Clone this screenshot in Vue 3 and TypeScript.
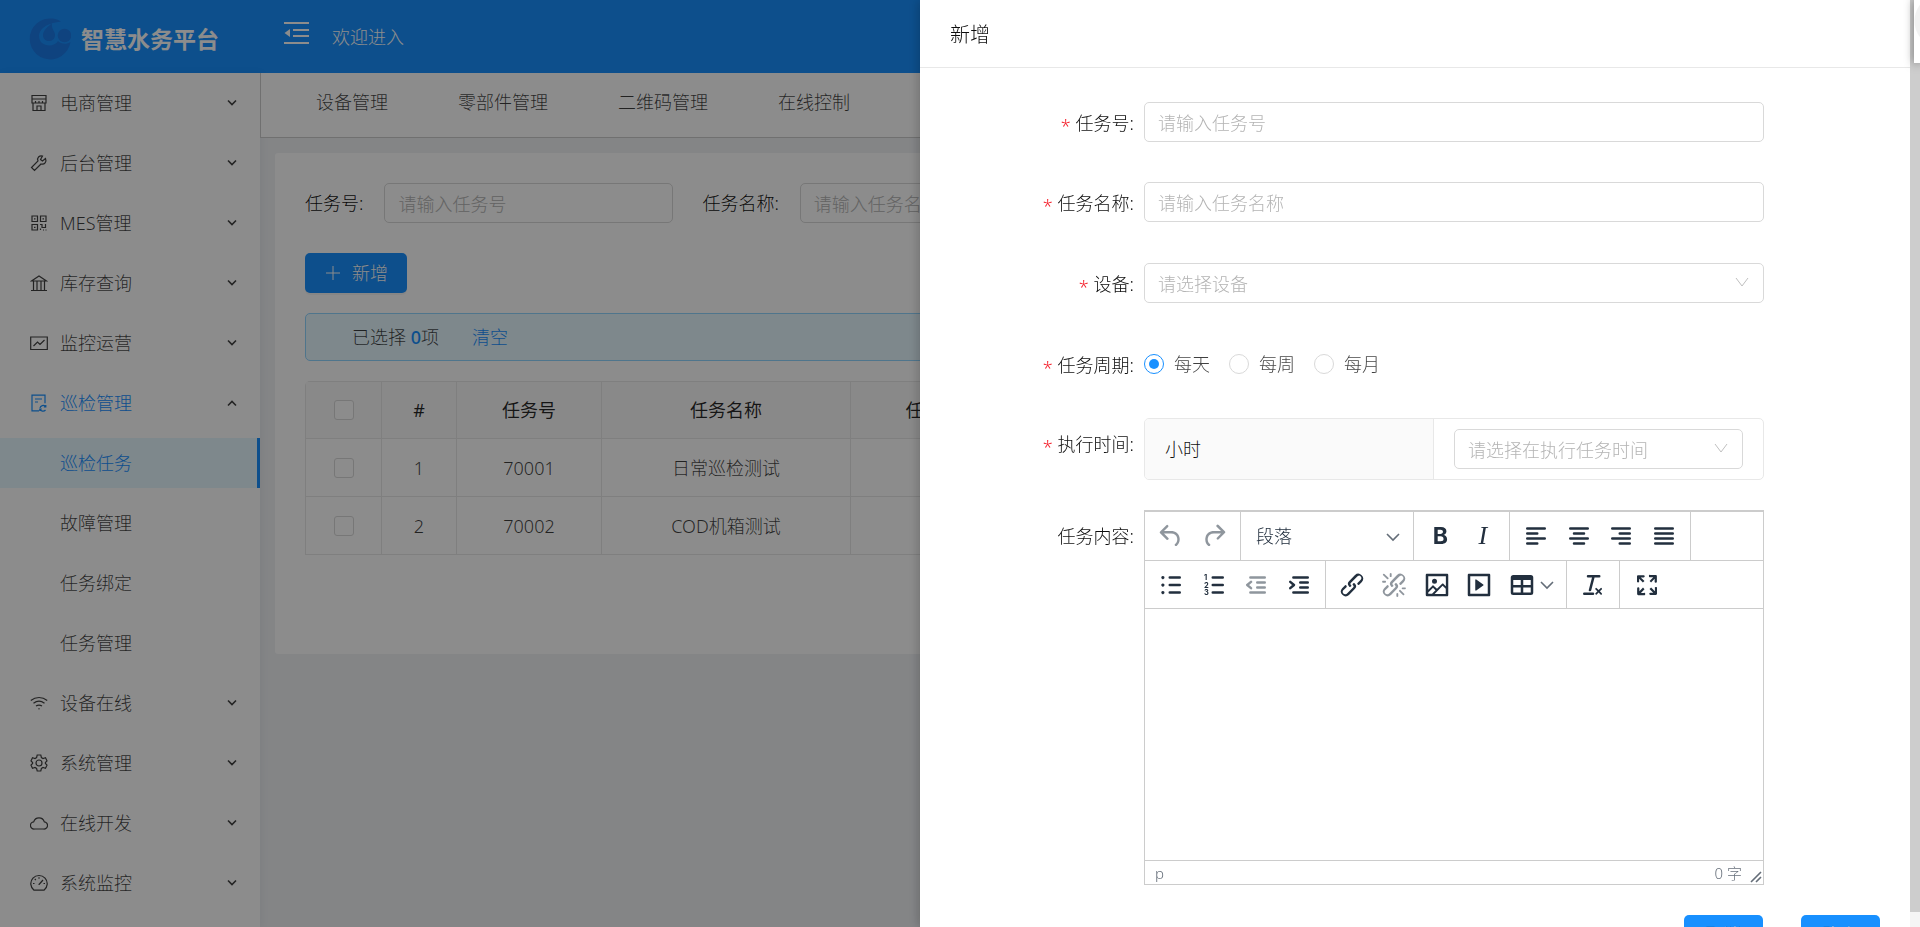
<script setup lang="ts">
import { ref } from 'vue'

interface MenuItem {
  label: string
  icon: string
  open?: boolean
  children?: string[]
}

interface ToolButton {
  label: string
  path?: string
  text?: string
  kind?: string
  disabled?: boolean
  menu?: boolean
  digits?: boolean
}

const menu: MenuItem[] = [
  { label: '电商管理', icon: 'M2 1.500h14V5H2zM2 5v4h14V5M5.500 7v2M9 7v2M12.500 7v2M3 9v7.500h12V9M7 16.500V12h4v4.500' },
  { label: '后台管理', icon: 'M15.500 4.500l-3 2.500-2-1.500 2-3.500c-3-1-6 2-4.500 5L1.500 13.500 4.500 16.500 11 10c3.500 1 6-2 4.500-5.500z' },
  { label: 'MES管理', icon: 'M2 2h5.500v5.500H2zM10.500 2H16v5.500h-5.500zM2 10.500h5.500V16H2zM4 4.800h1.500M12.500 4.800H14M4 13.300h1.500M10 10.500h2v3h3.500v-3.500M10.500 16v-1.500M13 16h1M15.500 16h1' },
  { label: '库存查询', icon: 'M1.500 7h15L9 2zM1 16.500h16M3.500 7v9M7 7v9M11 7v9M14.500 7v9' },
  { label: '监控运营', icon: 'M.7 3h16.600v12.500H.7zM3.500 12l4-4 2.500 2.500L14.500 6' },
  {
    label: '巡检管理',
    icon: 'M9 16.800H2V1.200h13v8M5 5h7M5 8h3M15.500 12.500a3.200 3.200 0 0 0-5.500 1.500M10 15a3.200 3.200 0 0 0 5.500 1M15.800 11v2h-2M9.800 17v-2h2',
    open: true,
    children: ['巡检任务', '故障管理', '任务绑定', '任务管理'],
  },
  { label: '设备在线', icon: 'M.8 6.500c5-4 11.500-4 16.400 0M3.500 9.300c3.400-2.700 7.600-2.700 11 0M6 12c2-1.300 4-1.300 6 0M8.500 14.500h1M8.500 15h1' },
  { label: '系统管理', icon: 'M7.200 1h3.600l.6 2.500 1.600 1 2.500-.8L17 6.800l-1.600 1.700v1L17 11.200l-1.500 3.100-2.500-.8-1.600 1-.6 2.500H7.200l-.6-2.500-1.600-1-2.500.8L1 11.200l1.600-1.700v-1L1 6.800l1.500-3.100 2.500.8 1.600-1zM12 9a3 3 0 1 1-6 0 3 3 0 0 1 6 0z' },
  { label: '在线开发', icon: 'M4.500 15a3.600 3.600 0 0 1-.8-7.200c1.600-5.300 9-5.300 10.600 0a3.600 3.600 0 0 1-.8 7.200z' },
  { label: '系统监控', icon: 'M4 16.200a8.200 8.200 0 1 1 10 0zM9 3.200v1.500M4.800 5l1 1M3 9.500h1.500M13.500 9.500H15M9 10.500l4-4.500M8.500 10.500h1' },
]
const activeChild = '巡检任务'

const tabs = ['设备管理', '零部件管理', '二维码管理', '在线控制']

const rows = [
  { index: 1, code: '70001', name: '日常巡检测试' },
  { index: 2, code: '70002', name: 'COD机箱测试' },
]

const periods = ['每天', '每周', '每月']
const period = ref('每天')

const linkPath =
  'M6.2 12.3a1 1 0 0 1 1.4 1.4l-2.1 2a2 2 0 1 0 2.7 2.8l4.8-4.8a1 1 0 0 0 0-1.4 1 1 0 1 1 1.4-1.3 2.9 2.9 0 0 1 0 4L9.6 20a3.9 3.9 0 0 1-5.5-5.5l2-2zm11.6-.6a1 1 0 0 1-1.4-1.4l2-2a2 2 0 1 0-2.6-2.8L11 10.3a1 1 0 0 0 0 1.4A1 1 0 1 1 9.6 13a2.9 2.9 0 0 1 0-4L14.4 4a3.9 3.9 0 0 1 5.5 5.5l-2 2z'

const undoRedo: ToolButton[] = [
  { label: '撤销', disabled: true, path: 'M6.4 8H12c3.7 0 6.2 2 6.8 5.1.6 2.7-.4 5.6-2.3 6.8a1 1 0 0 1-1-1.8c1.1-.6 1.8-2.7 1.4-4.6-.5-2.1-2.1-3.5-4.9-3.5H6.4l3.3 3.3a1 1 0 1 1-1.4 1.4l-5-5a1 1 0 0 1 0-1.4l5-5a1 1 0 0 1 1.4 1.4L6.4 8z' },
  { label: '重做', disabled: true, path: 'M17.6 10H12c-2.8 0-4.4 1.4-4.9 3.5-.4 2 .3 4 1.4 4.6a1 1 0 1 1-1 1.8c-2-1.2-2.9-4.1-2.3-6.8.6-3 3-5.1 6.8-5.1h5.6l-3.3-3.3a1 1 0 1 1 1.4-1.4l5 5a1 1 0 0 1 0 1.4l-5 5a1 1 0 0 1-1.4-1.4l3.3-3.3z' },
]
const styles: ToolButton[] = [
  { label: '粗体', text: 'B', kind: 'bold' },
  { label: '斜体', text: 'I', kind: 'italic' },
]
const aligns: ToolButton[] = [
  { label: '左对齐', kind: 'line', path: 'M5 6h14M5 10h8M5 14h14M5 18h8' },
  { label: '居中', kind: 'line', path: 'M5 6h14M8 10h8M5 14h14M8 18h8' },
  { label: '右对齐', kind: 'line', path: 'M5 6h14M11 10h8M5 14h14M11 18h8' },
  { label: '两端对齐', kind: 'line', path: 'M5 6h14M5 10h14M5 14h14M5 18h14' },
]
const lists: ToolButton[] = [
  { label: '项目符号', kind: 'line', path: 'M11 6h8M11 12h8M11 18h8M5.500 5.700v.6M5.500 11.700v.6M5.500 17.700v.6M5.200 6h.6M5.200 12h.6M5.200 18h.6' },
  { label: '编号列表', kind: 'line', digits: true, path: 'M11 6h8M11 12h8M11 18h8' },
  { label: '减少缩进', kind: 'line', disabled: true, path: 'M7.500 6H19M13 10h6M13 14h6M7.500 18H19M8 9.500L5 12l3 2.500' },
  { label: '增加缩进', kind: 'line', path: 'M7.500 6H19M13 10h6M13 14h6M7.500 18H19M5 9.500L8 12l-3 2.500' },
]
const inserts: ToolButton[] = [
  { label: '插入链接', path: linkPath },
  { label: '取消链接', disabled: true, path: linkPath + 'M7.6 6.3a.8.8 0 0 1-1 1.1L3.3 4.2a.7.7 0 1 1 1-1l3.2 3.1zM5.1 8.6a.8.8 0 0 1 0 1.5H3a.8.8 0 0 1 0-1.5H5zm5-3.5a.8.8 0 0 1-1.5 0V3a.8.8 0 0 1 1.5 0V5zm6 11.8a.8.8 0 0 1 1-1l3.2 3.2a.8.8 0 0 1-1 1L16 17zm-2.2 2a.8.8 0 0 1 1.5 0V21a.8.8 0 0 1-1.5 0V19zm5-3.5a.7.7 0 1 1 0-1.5H21a.8.8 0 0 1 0 1.5H19z' },
  { label: '插入图片', path: 'M5 15.7l3.3-3.2c.3-.3.7-.3 1 0L12 15l4.1-4c.3-.4.8-.4 1 0l2 1.9V5H5v10.7zM5 18V19h3l2.8-2.9-2-2L5 17.9zm14-3l-2.5-2.4-6.4 6.5H19v-4zM4 3h16c.6 0 1 .4 1 1v16c0 .6-.4 1-1 1H4a1 1 0 0 1-1-1V4c0-.6.4-1 1-1zm6 8a2 2 0 1 0 0-4 2 2 0 0 0 0 4z' },
  { label: '插入媒体', path: 'M4 3h16c.6 0 1 .4 1 1v16c0 .6-.4 1-1 1H4a1 1 0 0 1-1-1V4c0-.6.4-1 1-1zm1 2v14h14V5H5zm4.8 2.6l5.6 4a.5.5 0 0 1 0 .8l-5.6 4A.5.5 0 0 1 9 16V8a.5.5 0 0 1 .8-.4z' },
  { label: '表格', menu: true, path: 'M19 4a2 2 0 0 1 2 2v12a2 2 0 0 1-2 2H5a2 2 0 0 1-2-2V6c0-1.1.9-2 2-2h14zM5 14v4h6v-4H5zm14 0h-6v4h6v-4zm0-6h-6v4h6V8zM5 12h6V8H5v4z' },
]
const clears: ToolButton[] = [
  { label: '清除格式', path: 'M13.2 6a1 1 0 0 1 0 .2l-2.6 10a1 1 0 0 1-1 .8h-.2a.8.8 0 0 1-.8-1l2.6-10H8a1 1 0 1 1 0-2h9a1 1 0 0 1 0 2h-3.8zM5 18h7a1 1 0 0 1 0 2H5a1 1 0 0 1 0-2zm13 1.5L16.5 18 15 19.5a.7.7 0 0 1-1-1l1.5-1.5-1.5-1.5a.7.7 0 0 1 1-1l1.5 1.5 1.5-1.5a.7.7 0 0 1 1 1L17.5 17l1.5 1.5a.7.7 0 0 1-1 1z' },
]
const screens: ToolButton[] = [
  { label: '全屏', path: 'M15.3 10l-1.2-1.3 2.9-3h-2.3a.9.9 0 1 1 0-1.7H19c.5 0 .9.4.9.9v4.4a.9.9 0 1 1-1.8 0V7l-2.9 3zm0 4l3 3v-2.3a.9.9 0 1 1 1.7 0V19c0 .5-.4.9-.9.9h-4.4a.9.9 0 1 1 0-1.8H17l-3-2.9 1.3-1.2zM10 15.4l-2.9 3h2.3a.9.9 0 1 1 0 1.7H5a.9.9 0 0 1-.9-.9v-4.4a.9.9 0 1 1 1.8 0V17l2.9-3 1.2 1.3zM8.7 10L5.7 7v2.3a.9.9 0 0 1-1.7 0V5c0-.5.4-.9.9-.9h4.4a.9.9 0 0 1 0 1.8H7l3 2.9-1.3 1.2z' },
]

const toolbars = [
  [
    { id: 'history', buttons: undoRedo },
    { id: 'block', buttons: [] as ToolButton[] },
    { id: 'style', buttons: styles },
    { id: 'align', buttons: aligns },
  ],
  [
    { id: 'list', buttons: lists },
    { id: 'insert', buttons: inserts },
    { id: 'clear', buttons: clears },
    { id: 'screen', buttons: screens },
  ],
]
</script>

<template>
  <div class="app">
    <header class="topbar">
      <div class="brand">
        <svg class="logo" viewBox="0 0 42 42" aria-hidden="true">
          <path d="M32 3.500A20.500 20.500 0 1 0 41.500 24C37 27 32 26 29 23 26 28 18 29 13 25 7 19 9 6 32 3.500z" />
          <path d="M23 5c-3 3-9 7-9 12 0 8 12 8 12 0 0-4-4-6-3-12z" />
          <circle cx="35.500" cy="17.500" r="6.800" />
        </svg>
        <h1>智慧水务平台</h1>
      </div>
      <button class="fold" type="button" aria-label="收起菜单">
        <svg viewBox="0 0 25 22"><path d="M0 1h25M9 8h16M9 14h16M0 21h25" /><path class="fill" d="M6 7v8l-5.500-4z" /></svg>
      </button>
      <span class="welcome">欢迎进入</span>
    </header>

    <div class="body">
      <nav class="sidebar">
        <template v-for="item in menu" :key="item.label">
          <a href="#" class="item" :class="{ open: item.open }">
            <svg class="icon" viewBox="0 0 18 18"><path :d="item.icon" /></svg>
            <span>{{ item.label }}</span>
            <svg class="arrow" :class="{ up: item.open }" viewBox="0 0 10 8"><path d="M1 1.500l4 4 4-4" /></svg>
          </a>
          <a v-for="child in item.children" :key="child" href="#" class="item child" :class="{ active: child === activeChild }">{{ child }}</a>
        </template>
      </nav>

      <main>
        <div class="tabs">
          <a v-for="tab in tabs" :key="tab" href="#">{{ tab }}</a>
        </div>
        <section class="card">
          <div class="search">
            <label for="q-code">任务号:</label>
            <input id="q-code" class="field" placeholder="请输入任务号" />
            <label for="q-name">任务名称:</label>
            <input id="q-name" class="field" placeholder="请输入任务名称" />
          </div>
          <button class="primary add" type="button">
            <svg viewBox="0 0 14 14"><path d="M7 0v14M0 7h14" /></svg>新增
          </button>
          <div class="notice">
            <span>已选择 <b>0</b>项</span>
            <a href="#">清空</a>
          </div>
          <table>
            <colgroup>
              <col class="c-check" /><col class="c-index" /><col class="c-code" /><col class="c-name" /><col class="c-cycle" /><col />
            </colgroup>
            <thead>
              <tr>
                <th><input type="checkbox" aria-label="全选" /></th>
                <th>#</th>
                <th>任务号</th>
                <th>任务名称</th>
                <th>任务周期</th>
                <th></th>
              </tr>
            </thead>
            <tbody>
              <tr v-for="row in rows" :key="row.code">
                <td><input type="checkbox" :aria-label="row.name" /></td>
                <td>{{ row.index }}</td>
                <td>{{ row.code }}</td>
                <td>{{ row.name }}</td>
                <td></td>
                <td></td>
              </tr>
            </tbody>
          </table>
        </section>
      </main>
    </div>

    <div class="mask"></div>

    <aside class="drawer">
      <div class="panel">
        <h2>新增</h2>
        <form @submit.prevent>
          <div class="row">
            <label class="caption required" for="f-code">任务号:</label>
            <input id="f-code" class="field" placeholder="请输入任务号" />
          </div>
          <div class="row">
            <label class="caption required" for="f-name">任务名称:</label>
            <input id="f-name" class="field" placeholder="请输入任务名称" />
          </div>
          <div class="row">
            <label class="caption required" for="f-device">设备:</label>
            <div class="select">
              <select id="f-device" class="field"><option>请选择设备</option></select>
              <svg viewBox="0 0 14 10"><path d="M1 1l6 8 6-8" /></svg>
            </div>
          </div>
          <div class="row">
            <span id="f-period" class="caption required">任务周期:</span>
            <div class="radios" role="radiogroup" aria-labelledby="f-period">
              <label v-for="p in periods" :key="p"><input v-model="period" type="radio" name="period" :value="p" />{{ p }}</label>
            </div>
          </div>
          <div class="row tall">
            <label class="caption required" for="f-time">执行时间:</label>
            <div class="timebox">
              <div class="unit">小时</div>
              <div class="pick">
                <div class="select">
                  <select id="f-time" class="field"><option>请选择在执行任务时间</option></select>
                  <svg viewBox="0 0 14 10"><path d="M1 1l6 8 6-8" /></svg>
                </div>
              </div>
            </div>
          </div>
          <div class="row tall">
            <label class="caption" for="f-content">任务内容:</label>
            <div class="editor">
              <div v-for="(bar, b) in toolbars" :key="b" class="toolbar">
                <div v-for="group in bar" :key="group.id" class="group" :class="group.id">
                  <div v-if="group.id === 'block'" class="block-select">
                    <select aria-label="段落格式"><option>段落</option></select>
                    <svg viewBox="0 0 14 10"><path d="M1 2l6 6 6-6" /></svg>
                  </div>
                  <button
                    v-for="tool in group.buttons"
                    :key="tool.label"
                    type="button"
                    :aria-label="tool.label"
                    :disabled="tool.disabled"
                    :class="[tool.kind, { menu: tool.menu }]"
                  >
                    <template v-if="tool.text">{{ tool.text }}</template>
                    <svg v-else class="glyph" viewBox="0 0 24 24">
                      <path :d="tool.path" />
                      <g v-if="tool.digits" class="digits"><text x="4" y="8">1</text><text x="4" y="14">2</text><text x="4" y="20">3</text></g>
                    </svg>
                    <svg v-if="tool.menu" class="caret" viewBox="0 0 14 10"><path d="M1 2l6 6 6-6" /></svg>
                  </button>
                </div>
              </div>
              <textarea id="f-content"></textarea>
              <div class="status">
                <span>p</span>
                <span>0 字</span>
                <svg viewBox="0 0 12 12"><path d="M1 11L11 1M6 11l5-5" /></svg>
              </div>
            </div>
          </div>
          <div class="actions">
            <button class="primary" type="button">取消</button>
            <button class="primary" type="submit">确定</button>
          </div>
        </form>
      </div>
      <div class="scrollbar"></div>
      <div class="float"></div>
    </aside>
  </div>
</template>

<style>
body {
  margin: 0;
}
</style>

<style scoped>
* {
  box-sizing: border-box;
}
.app {
  height: 100vh;
  display: flex;
  flex-direction: column;
  overflow: hidden;
  background: #f0f2f5;
  color: rgba(0, 0, 0, 0.75);
  font: 300 18px/28px "Noto Sans", "Noto Sans CJK SC", sans-serif;
}
a {
  color: inherit;
  text-decoration: none;
}
button,
input,
select,
textarea {
  margin: 0;
  font: inherit;
  color: inherit;
}
.topbar {
  flex: none;
  height: 73px;
  display: flex;
  align-items: center;
  background: #1890ff;
  color: #fff;
}
.brand {
  width: 284px;
  display: flex;
  align-items: center;
  gap: 10px;
  padding: 5px 0 0 29px;
}
.logo {
  width: 42px;
  height: 42px;
  fill: #1d7ae7;
}
h1 {
  margin: 0;
  font-size: 23px;
  font-weight: 700;
  line-height: 34px;
}
.fold {
  padding: 0 0 8px;
  border: 0;
  background: none;
}
.fold svg {
  display: block;
  width: 25px;
  height: 22px;
  fill: none;
  stroke: #fff;
  stroke-width: 2;
}
.fold .fill {
  fill: #fff;
  stroke: none;
}
.welcome {
  margin-left: 23px;
}
.body {
  flex: 1;
  display: flex;
  min-height: 0;
}
.sidebar {
  flex: none;
  width: 260px;
  display: flex;
  flex-direction: column;
  gap: 10px;
  padding-top: 5px;
  overflow: hidden;
  background: #fff;
  box-shadow: 2px 0 8px rgba(29, 35, 41, 0.05);
}
.item {
  flex: none;
  height: 50px;
  display: flex;
  align-items: center;
  padding: 0 23px 0 30px;
}
.icon {
  width: 18px;
  height: 18px;
  margin-right: 12px;
  fill: none;
  stroke: currentColor;
  stroke-width: 1.2;
}
.arrow {
  width: 10px;
  height: 8px;
  margin-left: auto;
  fill: none;
  stroke: rgba(0, 0, 0, 0.75);
  stroke-width: 1.6;
}
.arrow.up {
  transform: rotate(180deg);
}
.open {
  color: #1890ff;
}
.child {
  padding-left: 60px;
}
.active {
  background: #e6f7ff;
  color: #1890ff;
  border-right: 3px solid #1890ff;
}
main {
  flex: 1;
  min-width: 0;
}
.tabs {
  height: 65px;
  display: flex;
  gap: 70px;
  padding: 15px 0 0 55px;
  background: #fff;
  border-left: 1px solid #ccc;
  border-bottom: 1px solid #ccc;
}
.card {
  height: 501px;
  margin: 15px;
  padding: 30px;
  background: #fff;
  border-radius: 3px;
}
.search {
  display: flex;
  align-items: center;
  color: rgba(0, 0, 0, 0.95);
}
.search label {
  margin-right: 21px;
}
.search .field {
  width: 289px;
  margin-right: 29px;
}
.field {
  display: block;
  width: 100%;
  height: 40px;
  padding: 2px 13px 0;
  border: 1px solid #d9d9d9;
  border-radius: 5px;
  background: #fff;
  outline: none;
}
.field::placeholder {
  color: #b4b4b4;
  opacity: 1;
}
.primary {
  height: 40px;
  border: 0;
  border-radius: 5px;
  background: #1890ff;
  color: #fff;
  text-shadow: 0 -1px 0 rgba(0, 0, 0, 0.12);
  box-shadow: 0 2px 0 rgba(0, 0, 0, 0.04);
}
.add {
  display: flex;
  align-items: center;
  gap: 12px;
  margin: 30px 0 20px;
  padding: 0 19px 0 21px;
}
.add svg {
  width: 14px;
  height: 14px;
  stroke: #fff;
}
.notice {
  height: 48px;
  display: flex;
  align-items: center;
  gap: 33px;
  padding-left: 46px;
  border: 1px solid #91d5ff;
  border-radius: 5px;
  background: #e6f7ff;
}
.notice a,
.notice b {
  color: #1890ff;
}
.notice b {
  font-weight: 500;
}
table {
  width: 100%;
  margin-top: 20px;
  table-layout: fixed;
  border-collapse: separate;
  border-spacing: 0;
  border-top: 1px solid #e8e8e8;
  border-left: 1px solid #e8e8e8;
  border-radius: 5px 5px 0 0;
}
.c-check {
  width: 76px;
}
.c-index {
  width: 75px;
}
.c-code {
  width: 145px;
}
.c-name {
  width: 249px;
}
.c-cycle {
  width: 182px;
}
th,
td {
  height: 58px;
  padding: 0;
  text-align: center;
  border-right: 1px solid #e8e8e8;
  border-bottom: 1px solid #e8e8e8;
}
th {
  height: 57px;
  background: #fafafa;
  color: rgba(0, 0, 0, 0.85);
  font-weight: 400;
}
input[type="checkbox"] {
  display: block;
  width: 20px;
  height: 20px;
  margin: 0 auto;
  appearance: none;
  border: 1px solid #d9d9d9;
  border-radius: 3px;
  background: #fff;
}
.mask {
  position: fixed;
  inset: 0;
  background: rgba(0, 0, 0, 0.45);
}
.drawer {
  position: fixed;
  top: 0;
  right: 0;
  bottom: 0;
  width: 1000px;
  max-width: 100%;
  display: flex;
  background: #fff;
  box-shadow: -2px 0 10px rgba(0, 0, 0, 0.2);
}
.panel {
  flex: 1;
  min-width: 0;
  overflow: hidden;
}
h2 {
  margin: 0;
  padding: 21px 30px 18px;
  border-bottom: 1px solid #e8e8e8;
  color: rgba(0, 0, 0, 0.95);
  font-size: 20px;
  font-weight: 300;
  line-height: 28px;
}
form {
  padding: 34px 30px 0;
}
.row {
  display: grid;
  grid-template-columns: 184px minmax(0, 620px);
  column-gap: 10px;
  min-height: 41px;
  margin-bottom: 40px;
}
.row:first-child {
  min-height: 40px;
}
.row.tall {
  margin-top: -7px;
  margin-bottom: 37px;
}
.caption {
  height: 40px;
  padding-top: 1px;
  text-align: right;
  line-height: 40px;
  color: rgba(0, 0, 0, 0.95);
}
.tall .caption {
  padding-top: 6px;
}
.required::before {
  content: "*";
  margin-right: 5px;
  color: #f5222d;
  line-height: 20px;
  vertical-align: -3px;
}
.select {
  position: relative;
}
.select select {
  appearance: none;
  color: #b4b4b4;
}
.select svg {
  position: absolute;
  top: 14px;
  right: 15px;
  width: 14px;
  height: 10px;
  fill: none;
  stroke: #bfbfbf;
  pointer-events: none;
}
.radios {
  display: flex;
  gap: 19px;
  height: 40px;
}
.radios label {
  display: flex;
  align-items: center;
  gap: 10px;
}
.radios input {
  display: grid;
  place-items: center;
  width: 20px;
  height: 20px;
  appearance: none;
  border: 1px solid #d9d9d9;
  border-radius: 50%;
}
.radios input:checked {
  border-color: #1890ff;
}
.radios input:checked::before {
  content: "";
  width: 10px;
  height: 10px;
  border-radius: 50%;
  background: #1890ff;
}
.timebox {
  height: 62px;
  display: flex;
  border: 1px solid #e8e8e8;
  border-radius: 5px;
  overflow: hidden;
}
.unit {
  width: 289px;
  padding-left: 20px;
  line-height: 60px;
  background: #fafafa;
  border-right: 1px solid #e8e8e8;
  color: rgba(0, 0, 0, 0.95);
}
.pick {
  flex: 1;
  padding: 10px 20px;
}
.editor {
  display: flex;
  flex-direction: column;
  border: 1px solid #ccc;
  border-top-width: 2px;
  color: #222f3e;
}
.toolbar {
  height: 49px;
  display: flex;
  border-bottom: 1px solid #ccc;
}
.toolbar + .toolbar {
  height: 48px;
}
.group {
  display: flex;
  align-items: center;
  padding: 0 5px;
  border-right: 1px solid #ccc;
}
.history,
.style {
  width: 96px;
}
.block {
  width: 173px;
}
.align,
.list {
  width: 181px;
}
.insert {
  width: 241px;
}
.clear {
  width: 53px;
}
.screen {
  width: 54px;
  border-right: 0;
}
.group button {
  flex: 1;
  height: 42px;
  display: flex;
  align-items: center;
  justify-content: center;
  padding: 0;
  border: 0;
  background: none;
}
.group button.menu {
  flex: none;
  width: 61px;
  gap: 3px;
}
.group button:disabled {
  opacity: 0.5;
}
.group .bold {
  font: 700 23px/30px Inter, "Liberation Sans", sans-serif;
}
.group .italic {
  font: italic 400 26px/30px "Liberation Serif", serif;
}
.glyph {
  flex: none;
  width: 30px;
  height: 30px;
  fill: #222f3e;
  fill-rule: evenodd;
}
.line .glyph path {
  fill: none;
  stroke: #222f3e;
  stroke-width: 2;
  stroke-linecap: round;
  stroke-linejoin: round;
}
.digits {
  font: 700 6px Inter, "Liberation Sans", sans-serif;
}
.caret,
.block-select svg {
  width: 14px;
  height: 10px;
  fill: none;
  stroke: #222f3e;
  stroke-opacity: 0.7;
  stroke-width: 1.6;
}
.block-select {
  flex: 1;
  position: relative;
}
.block-select select {
  display: block;
  width: 100%;
  height: 38px;
  padding: 0 10px;
  appearance: none;
  border: 0;
  background: none;
}
.block-select svg {
  position: absolute;
  top: 15px;
  right: 8px;
  pointer-events: none;
}
textarea {
  display: block;
  width: 100%;
  height: 251px;
  padding: 10px;
  border: 0;
  outline: none;
  resize: none;
}
.status {
  height: 24px;
  display: flex;
  align-items: center;
  gap: 8px;
  padding: 0 1px 0 10px;
  border-top: 1px solid #ccc;
  color: rgba(34, 47, 62, 0.7);
  font-size: 15px;
  line-height: 22px;
}
.status span:first-child {
  margin-right: auto;
}
.status svg {
  align-self: flex-end;
  width: 12px;
  height: 12px;
  margin-bottom: 1px;
  fill: none;
  stroke: currentColor;
  stroke-width: 1.6;
}
.actions {
  display: flex;
  justify-content: flex-end;
  gap: 38px;
  margin-top: -7px;
}
.actions button {
  width: 79px;
  padding: 0;
}
.scrollbar {
  flex: none;
  width: 10px;
  background: linear-gradient(#cdcdcd, #cdcdcd) top / 100% calc(100% - 15px) no-repeat #f5f5f5;
}
.float {
  position: absolute;
  top: 0;
  right: 0;
  width: 6px;
  height: 63px;
  background: radial-gradient(circle at 27px 21px, #f2f2f2 26px, #fff 27px);
  box-shadow: 0 0 10px rgba(0, 0, 0, 0.5);
}
</style>
